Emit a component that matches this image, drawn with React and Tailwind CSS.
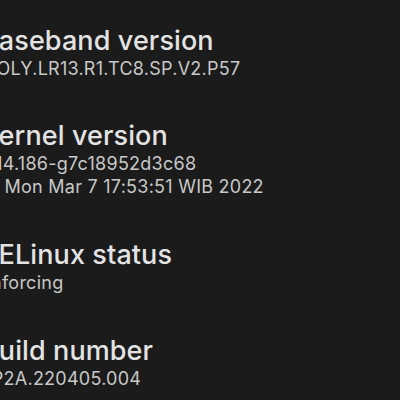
export default function App() {
  const items = [
    { t: "Baseband version", s: ["MOLY.LR13.R1.TC8.SP.V2.P57"], m: "" },
    { t: "Kernel version", s: ["4.14.186-g7c18952d3c68", "#1 Mon Mar 7 17:53:51 WIB 2022"], m: "mt-[40px]" },
    { t: "SELinux status", s: ["Enforcing"], m: "mt-[41px]" },
    { t: "Build number", s: ["SP2A.220405.004"], m: "mt-[41px]" },
  ];
  return (
    <div className="w-[400px] h-[400px] overflow-hidden bg-[#1b1b1b]" style={{ fontFamily: 'Inter, sans-serif' }}>
      <div className="ml-[-19px] pt-[25px] flex flex-col">
        {items.map((it) => (
          <div key={it.t} className={"flex flex-col " + it.m}>
            <div className="text-[27px] leading-[32px] font-medium text-[#e3e3e3] whitespace-nowrap tracking-[0.1px]">{it.t}</div>
            {it.s.map((l) => (
              <div key={l} className="ml-[-1px] text-[18px] leading-[23px] tracking-[0.25px] text-[#c8c8c8] whitespace-nowrap">{l}</div>
            ))}
          </div>
        ))}
      </div>
    </div>
  );
}
